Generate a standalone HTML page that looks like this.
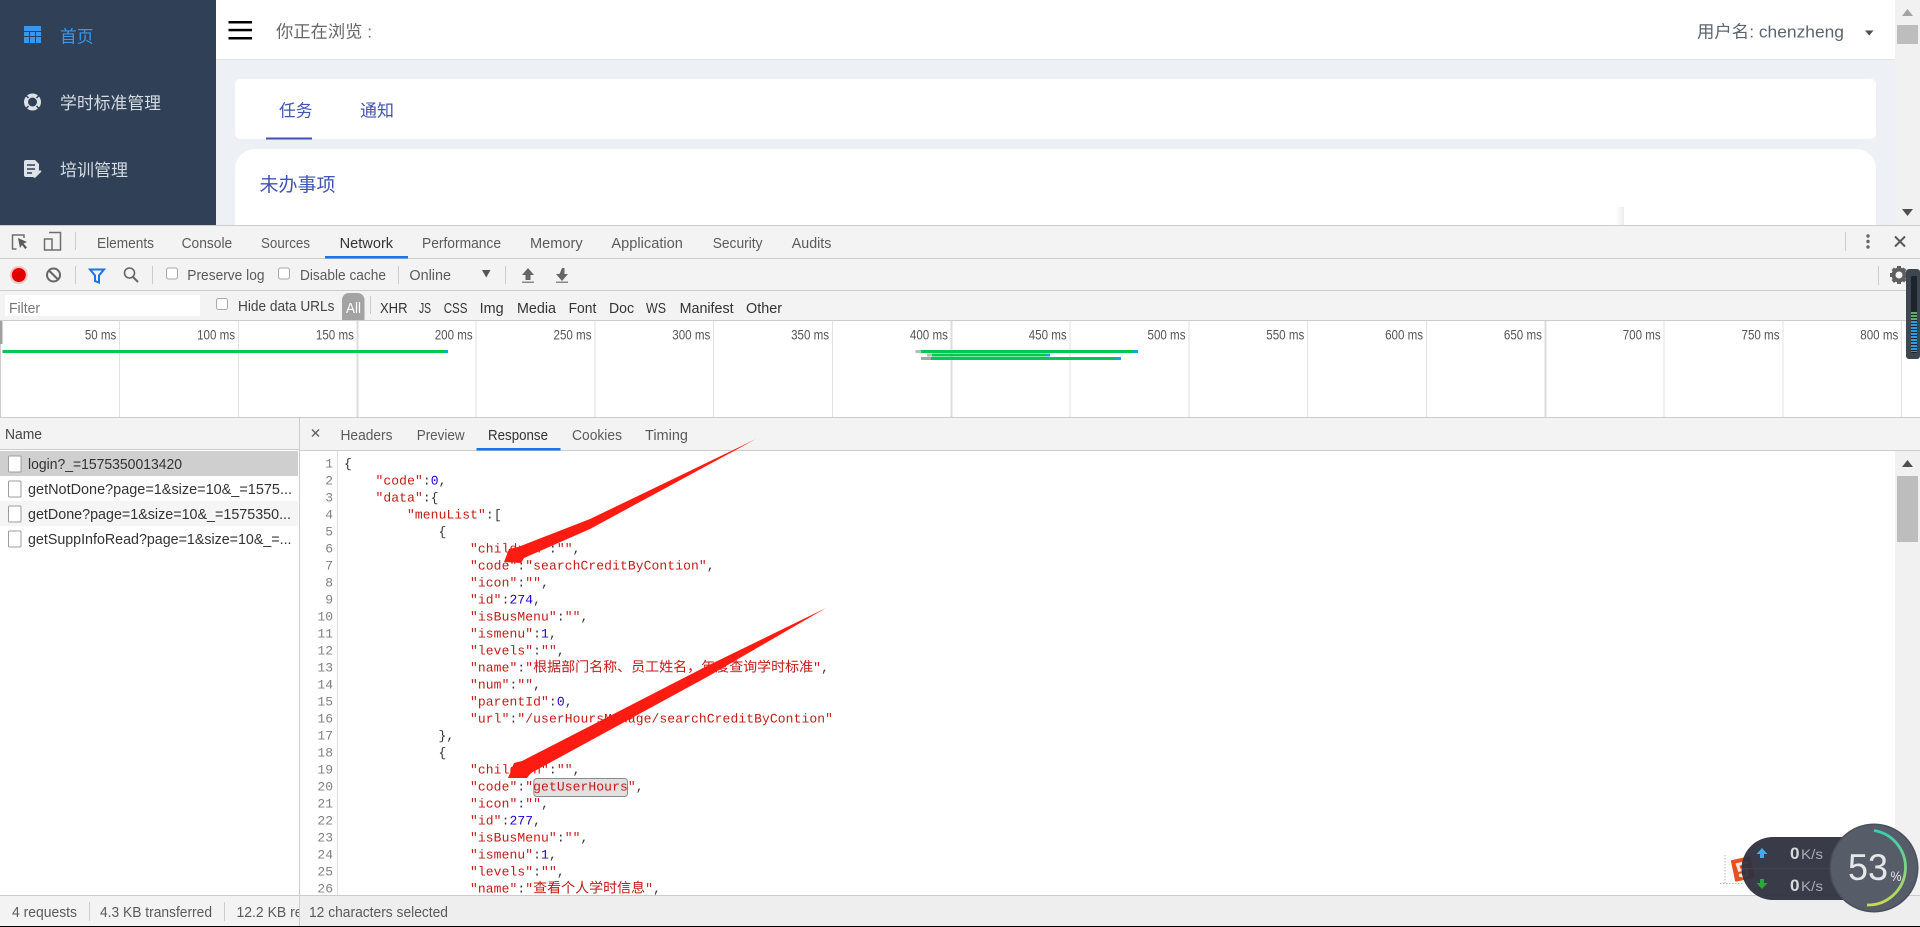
<!DOCTYPE html>
<html lang="zh-CN">
<head>
<meta charset="utf-8">
<title>Network</title>
<style>
html,body{margin:0;padding:0;background:#fff;overflow:hidden;width:1920px;height:927px}
svg{display:block}
text{font-family:"Liberation Sans","Noto Sans CJK SC",sans-serif;white-space:pre}
.dv{font-size:15px;fill:#5a5a5a}
.dk{font-size:15px;fill:#333}
.ms{font-size:13.5px;fill:#555}
.st{font-size:14.5px;fill:#5a5a5a}
.cn{font-size:17px;fill:#666}
.m{font-family:"Liberation Mono","Noto Sans CJK SC",monospace;font-size:13px;letter-spacing:.09px;fill:#c41a16;text-rendering:geometricPrecision}
.m tspan.p{fill:#333}
.m tspan.n{fill:#1c00cf}
.m tspan.c{font-family:"Noto Sans CJK SC",sans-serif;font-size:14px;letter-spacing:0}
.g{font-family:"Liberation Mono",monospace;font-size:13px;fill:#808080;text-anchor:end}
.e{text-anchor:end}
</style>
</head>
<body>
<svg xmlns="http://www.w3.org/2000/svg" width="1920" height="927" viewBox="0 0 1920 927">
<defs>
<linearGradient id="fade" x1="0" x2="1" y1="0" y2="0"><stop offset="0" stop-color="#fff"/><stop offset="1" stop-color="#ececec"/></linearGradient>
<linearGradient id="ring" x1="0" x2="0" y1="0" y2="1"><stop offset="0" stop-color="#34d0b0"/><stop offset="1" stop-color="#c8dc50"/></linearGradient>
<pattern id="led" width="6" height="3" patternUnits="userSpaceOnUse"><rect width="6" height="2" fill="#2a9fd8"/></pattern>
<pattern id="ledg" width="6" height="3" patternUnits="userSpaceOnUse"><rect width="6" height="2" fill="#5fae6a"/></pattern>
<clipPath id="cname"><rect x="0" y="895" width="299" height="31"/></clipPath>
</defs>

<!-- page behind devtools -->
<rect width="1920" height="927" fill="#fff"/>
<rect x="216" y="59" width="1679" height="166" fill="#edf1f5"/>
<rect x="216" y="0" width="1679" height="59" fill="#fff"/>
<rect x="216" y="59" width="1679" height="1" fill="#e2e5e8"/>
<rect x="0" y="0" width="216" height="225" fill="#2f4057"/>

<!-- sidebar icons -->
<g>
<rect x="24" y="26" width="17" height="17" fill="#3a97ee"/>
<g fill="#2f4057"><rect x="24" y="31" width="17" height="1"/><rect x="24" y="36" width="17" height="1"/><rect x="29" y="31" width="1" height="12"/><rect x="35" y="31" width="1" height="12"/></g>
</g>
<g transform="translate(32.5 102)">
<circle r="6.500" fill="none" stroke="#dde2e8" stroke-width="4"/>
<g stroke="#2f4057" stroke-width="1.500"><path d="M-7-7l3 3M7-7l-3 3M-7 7l3-3M7 7l-3-3"/></g>
</g>
<g>
<path d="M24 162q0-2 2-2h9l4 4v7l-5 6H26q-2 0-2-2z" fill="#dde2e8"/>
<g stroke="#2f4057" stroke-width="1.400"><path d="M27 165h8M27 169h8M27 173h5"/></g>
<path d="M34 176l6-6 1.500 1.500-6 6-2 .5z" fill="#dde2e8"/>
</g>

<text x="60" y="42.500" fill="#3a97ee" lengthAdjust="spacingAndGlyphs" textLength="33.500" style="font-size:17px">首页</text>
<text x="60" y="109" style="font-size:17px" fill="#d5dbe2" lengthAdjust="spacingAndGlyphs" textLength="101">学时标准管理</text>
<text x="60" y="176" style="font-size:17px" fill="#d5dbe2" lengthAdjust="spacingAndGlyphs" textLength="68">培训管理</text>

<!-- header -->
<g fill="#000"><rect x="228.500" y="21" width="23.500" height="2.500"/><rect x="228.500" y="28.800" width="23.500" height="2.500"/><rect x="228.500" y="37" width="23.500" height="2.500"/></g>
<text class="cn" x="276" y="37.500" lengthAdjust="spacingAndGlyphs" textLength="96">你正在浏览 :</text>
<text x="1697" y="37.500" style="font-size:17px" fill="#5c6470" lengthAdjust="spacingAndGlyphs" textLength="147">用户名: chenzheng</text>
<path d="M1865 30.500h8.500l-4.250 5z" fill="#4a5058"/>

<!-- cards -->
<rect x="235" y="79" width="1641" height="60" rx="5" fill="#fff"/>
<rect x="266" y="137.500" width="46" height="2" fill="#4054b2"/>
<text x="279" y="116.500" style="font-size:17px" fill="#4054b2" lengthAdjust="spacingAndGlyphs" textLength="33.500">任务</text>
<text x="360" y="116.500" style="font-size:17px" fill="#4054b2" lengthAdjust="spacingAndGlyphs" textLength="34">通知</text>
<path d="M235 225V169a20 20 0 0 1 20-20H1856a20 20 0 0 1 20 20V225z" fill="#fff"/>
<text x="259.500" y="191" style="font-size:19px" fill="#4054b2" lengthAdjust="spacingAndGlyphs" textLength="76">未办事项</text>
<rect x="1615" y="207" width="9" height="18" fill="url(#fade)"/>

<!-- page scrollbar -->
<rect x="1895" y="0" width="25" height="225" fill="#f1f1f1"/>
<path d="M1907.500 9l5.500 7h-11z" fill="#a3a3a3"/>
<rect x="1897" y="25" width="21" height="19" fill="#bdbdbd"/>
<path d="M1902 209h11l-5.500 7z" fill="#505050"/>

<!-- devtools chrome -->
<rect x="0" y="225" width="1920" height="95" fill="#f3f3f3"/>
<rect x="0" y="225" width="1920" height="1" fill="#ccc"/>
<rect x="0" y="258" width="1920" height="1" fill="#ccc"/>
<rect x="0" y="290" width="1920" height="1" fill="#ccc"/>
<rect x="0" y="320" width="1920" height="1" fill="#ccc"/>

<!-- toolbar 1 icons -->
<g fill="none" stroke="#6e6e6e" stroke-width="1.500">
<path d="M24 238v-3h-11.500v14h4"/>
</g>
<path d="M18 238l9 4-3.500 1.500 3.500 4-1.800 1.500-3.200-4-2 3z" fill="#5a5a5a"/>
<g fill="none" stroke="#6e6e6e" stroke-width="1.500">
<path d="M49 232.500h11.500v17.500H44.500V239H52v11"/>
</g>
<rect x="75" y="232" width="1" height="18" fill="#ccc"/>

<text class="dv" x="97" y="248" lengthAdjust="spacingAndGlyphs" textLength="57">Elements</text>
<text class="dv" x="181.600" y="248" lengthAdjust="spacingAndGlyphs" textLength="50.600">Console</text>
<text class="dv" x="261" y="248" lengthAdjust="spacingAndGlyphs" textLength="49">Sources</text>
<text class="dk" x="339.600" y="248" lengthAdjust="spacingAndGlyphs" textLength="53.500">Network</text>
<text class="dv" x="422" y="248" lengthAdjust="spacingAndGlyphs" textLength="79">Performance</text>
<text class="dv" x="530" y="248" lengthAdjust="spacingAndGlyphs" textLength="52.600">Memory</text>
<text class="dv" x="611.400" y="248" lengthAdjust="spacingAndGlyphs" textLength="71.500">Application</text>
<text class="dv" x="712.700" y="248" lengthAdjust="spacingAndGlyphs" textLength="49.800">Security</text>
<text class="dv" x="791.800" y="248" lengthAdjust="spacingAndGlyphs" textLength="39.600">Audits</text>
<rect x="325" y="256" width="83" height="2.500" fill="#1a73e8"/>

<rect x="1845" y="232" width="1" height="19" fill="#ccc"/>
<g fill="#666"><circle cx="1868" cy="236" r="1.700"/><circle cx="1868" cy="241.500" r="1.700"/><circle cx="1868" cy="247" r="1.700"/></g>
<path d="M1895 236.500l10 10M1905 236.500l-10 10" stroke="#5a5a5a" stroke-width="2"/>

<!-- toolbar 2 -->
<circle cx="18.800" cy="275" r="9" fill="#f4c4c4"/>
<circle cx="18.800" cy="275" r="7" fill="#e00000"/>
<circle cx="53.500" cy="275" r="6.500" fill="none" stroke="#666" stroke-width="2"/>
<path d="M49 270.500l9 9" stroke="#666" stroke-width="2"/>
<rect x="75" y="266" width="1" height="18" fill="#ccc"/>
<path d="M90 269.500h14l-5 6v7l-4-1.500v-5.500z" fill="none" stroke="#1a73e8" stroke-width="2"/>
<circle cx="129.500" cy="273" r="5" fill="none" stroke="#666" stroke-width="1.600"/>
<path d="M133 277l5 5" stroke="#666" stroke-width="2"/>
<rect x="152" y="266" width="1" height="18" fill="#ccc"/>
<rect x="166.500" y="268" width="11" height="11" rx="2" fill="#fff" stroke="#aaa"/>
<text class="dv" x="187.300" y="280" lengthAdjust="spacingAndGlyphs" textLength="77.200">Preserve log</text>
<rect x="278.500" y="268" width="11" height="11" rx="2" fill="#fff" stroke="#aaa"/>
<text class="dv" x="300" y="280" lengthAdjust="spacingAndGlyphs" textLength="86">Disable cache</text>
<rect x="398" y="266" width="1" height="18" fill="#ccc"/>
<text class="dv" x="409.400" y="280" lengthAdjust="spacingAndGlyphs" textLength="41.600">Online</text>
<path d="M482 270h8.500l-4.250 7.500z" fill="#555"/>
<rect x="505" y="266" width="1" height="18" fill="#ccc"/>
<path d="M528 268l6 7h-3.500v5h-5v-5H522z" fill="#666"/><rect x="522" y="281.500" width="12" height="1.500" fill="#888"/>
<path d="M561.500 268h2.500v6h3.500l-6 7-6-7h3.500z" transform="translate(.5 0)" fill="#666"/><rect x="556" y="281.500" width="12" height="1.500" fill="#888"/>
<rect x="1878" y="266" width="1" height="19" fill="#ccc"/>
<g transform="translate(1899 275)" fill="#5f5f5f">
<circle r="5.500" fill="none" stroke="#5f5f5f" stroke-width="4"/>
<path d="M-2-9h4v4h-4zM-2 5h4v4h-4zM-9-2h4v4h-4zM5-2h4v4H5zM-7.500-5l2.500-2.500 3 3-2.500 2.500zM4.500-7.500l3 2.500-3 3-2.500-3zM-7.500 5l3-2.500 2.500 3-3 2.500zM2.500 5l2.500-3 2.500 3-2.500 2.500z"/>
</g>

<!-- toolbar 3 -->
<rect x="5" y="295" width="195" height="21" fill="#fff"/>
<text class="st" x="9" y="313" style="fill:#777" lengthAdjust="spacingAndGlyphs" textLength="31">Filter</text>
<rect x="216.500" y="298.500" width="11" height="11" rx="2" fill="#fff" stroke="#aaa"/>
<text class="dk" x="238" y="311" lengthAdjust="spacingAndGlyphs" textLength="96.500" style="fill:#444">Hide data URLs</text>
<path d="M342 320V300a7 7 0 0 1 7-7h8.500a7 7 0 0 1 7 7V320z" fill="#a3a3a3"/>
<text x="346" y="313" style="font-size:15px" fill="#fff" lengthAdjust="spacingAndGlyphs" textLength="15">All</text>
<rect x="370" y="296" width="1" height="18" fill="#ccc"/>
<g class="ft">
<text class="dk" x="380" y="313" lengthAdjust="spacingAndGlyphs" textLength="27.500">XHR</text>
<text class="dk" x="419" y="313" lengthAdjust="spacingAndGlyphs" textLength="12">JS</text>
<text class="dk" x="443.700" y="313" lengthAdjust="spacingAndGlyphs" textLength="23.700">CSS</text>
<text class="dk" x="479.600" y="313" lengthAdjust="spacingAndGlyphs" textLength="24">Img</text>
<text class="dk" x="517" y="313" lengthAdjust="spacingAndGlyphs" textLength="39">Media</text>
<text class="dk" x="568.600" y="313" lengthAdjust="spacingAndGlyphs" textLength="27.700">Font</text>
<text class="dk" x="609" y="313" lengthAdjust="spacingAndGlyphs" textLength="25">Doc</text>
<text class="dk" x="646" y="313" lengthAdjust="spacingAndGlyphs" textLength="20">WS</text>
<text class="dk" x="679.600" y="313" lengthAdjust="spacingAndGlyphs" textLength="54">Manifest</text>
<text class="dk" x="746" y="313" lengthAdjust="spacingAndGlyphs" textLength="36">Other</text>
</g>

<!-- overview -->
<rect x="0" y="321" width="1920" height="96" fill="#fff"/>
<rect x="0" y="321" width="1" height="96" fill="#ccc"/>
<g fill="#e2e2e2">
<rect x="119" y="321" width="1" height="96"/><rect x="238" y="321" width="1" height="96"/><rect x="356.500" y="321" width="2" height="96" fill="#dcdcdc"/><rect x="475.500" y="321" width="1" height="96"/><rect x="594.500" y="321" width="1" height="96"/><rect x="713" y="321" width="1" height="96"/><rect x="832" y="321" width="1" height="96"/><rect x="950.500" y="321" width="2" height="96" fill="#dcdcdc"/><rect x="1069.500" y="321" width="1" height="96"/><rect x="1188.500" y="321" width="1" height="96"/><rect x="1307" y="321" width="1" height="96"/><rect x="1426" y="321" width="1" height="96"/><rect x="1544.500" y="321" width="2" height="96" fill="#dcdcdc"/><rect x="1663.500" y="321" width="1" height="96"/><rect x="1782.500" y="321" width="1" height="96"/><rect x="1901" y="321" width="1" height="96"/>
</g>
<rect x="0" y="321" width="2.500" height="23" fill="#a0a0a0"/>
<g>
<text class="ms" x="84.900" y="339.500" lengthAdjust="spacingAndGlyphs" textLength="31.400">50 ms</text>
<text class="ms" x="197.100" y="339.500" lengthAdjust="spacingAndGlyphs" textLength="38">100 ms</text>
<text class="ms" x="315.900" y="339.500" lengthAdjust="spacingAndGlyphs" textLength="38">150 ms</text>
<text class="ms" x="434.700" y="339.500" lengthAdjust="spacingAndGlyphs" textLength="38">200 ms</text>
<text class="ms" x="553.500" y="339.500" lengthAdjust="spacingAndGlyphs" textLength="38">250 ms</text>
<text class="ms" x="672.300" y="339.500" lengthAdjust="spacingAndGlyphs" textLength="38">300 ms</text>
<text class="ms" x="791.100" y="339.500" lengthAdjust="spacingAndGlyphs" textLength="38">350 ms</text>
<text class="ms" x="909.900" y="339.500" lengthAdjust="spacingAndGlyphs" textLength="38">400 ms</text>
<text class="ms" x="1028.700" y="339.500" lengthAdjust="spacingAndGlyphs" textLength="38">450 ms</text>
<text class="ms" x="1147.500" y="339.500" lengthAdjust="spacingAndGlyphs" textLength="38">500 ms</text>
<text class="ms" x="1266.300" y="339.500" lengthAdjust="spacingAndGlyphs" textLength="38">550 ms</text>
<text class="ms" x="1385.100" y="339.500" lengthAdjust="spacingAndGlyphs" textLength="38">600 ms</text>
<text class="ms" x="1503.900" y="339.500" lengthAdjust="spacingAndGlyphs" textLength="38">650 ms</text>
<text class="ms" x="1622.700" y="339.500" lengthAdjust="spacingAndGlyphs" textLength="38">700 ms</text>
<text class="ms" x="1741.500" y="339.500" lengthAdjust="spacingAndGlyphs" textLength="38">750 ms</text>
<text class="ms" x="1860.300" y="339.500" lengthAdjust="spacingAndGlyphs" textLength="38">800 ms</text>
</g>
<rect x="2" y="350" width="2" height="3" fill="#bbb"/>
<rect x="3" y="350" width="442" height="3" fill="#00c853"/><rect x="445" y="350" width="3" height="3" fill="#12a5ef"/>
<rect x="915.500" y="350" width="6" height="3" fill="#bbb"/><rect x="921" y="350" width="212" height="3" fill="#00c853"/><rect x="1133" y="350" width="5" height="3" fill="#12a5ef"/>
<rect x="927" y="353.500" width="5" height="3" fill="#bbb"/><rect x="932" y="353.500" width="114" height="3" fill="#00c853"/><rect x="1046" y="353.500" width="4" height="3" fill="#12a5ef"/>
<rect x="921" y="357" width="10" height="3" fill="#a8a8a8"/><rect x="931" y="357" width="184.500" height="3" fill="#00c853"/><rect x="1115.500" y="357" width="5.500" height="3" fill="#12a5ef"/>
<rect x="0" y="417" width="1920" height="1" fill="#ccc"/>

<!-- name column -->
<rect x="0" y="418" width="299" height="32" fill="#f3f3f3"/>
<rect x="0" y="449" width="299" height="1" fill="#ccc"/>
<rect x="0" y="451" width="298" height="25" fill="#cfcfcf"/>
<rect x="0" y="501" width="298" height="25" fill="#f5f5f5"/>
<text class="dk" x="5" y="439" lengthAdjust="spacingAndGlyphs" textLength="37" style="fill:#444">Name</text>
<g fill="#fff" stroke="#9d9d9d">
<rect x="8.500" y="456" width="12.500" height="16" rx="1"/>
<rect x="8.500" y="481" width="12.500" height="16" rx="1"/>
<rect x="8.500" y="506" width="12.500" height="16" rx="1"/>
<rect x="8.500" y="531" width="12.500" height="16" rx="1"/>
</g>
<text class="dk" x="28" y="469" lengthAdjust="spacingAndGlyphs" textLength="154">login?_=1575350013420</text>
<text class="dk" x="28" y="494" lengthAdjust="spacingAndGlyphs" textLength="264">getNotDone?page=1&amp;size=10&amp;_=1575...</text>
<text class="dk" x="28" y="519" lengthAdjust="spacingAndGlyphs" textLength="263">getDone?page=1&amp;size=10&amp;_=1575350...</text>
<text class="dk" x="28" y="544" lengthAdjust="spacingAndGlyphs" textLength="263.500">getSuppInfoRead?page=1&amp;size=10&amp;_=...</text>
<rect x="299" y="417" width="1" height="478" fill="#ccc"/>

<!-- detail tabs -->
<rect x="300" y="418" width="1620" height="32" fill="#f3f3f3"/>
<rect x="300" y="450" width="1620" height="1" fill="#ccc"/>
<path d="M312 429.500l7 7M319 429.500l-7 7" stroke="#666" stroke-width="1.500"/>
<text class="dv" x="340.500" y="440" lengthAdjust="spacingAndGlyphs" textLength="52">Headers</text>
<text class="dv" x="416.700" y="440" lengthAdjust="spacingAndGlyphs" textLength="48">Preview</text>
<text class="dk" x="488" y="440" lengthAdjust="spacingAndGlyphs" textLength="60">Response</text>
<text class="dv" x="572" y="440" lengthAdjust="spacingAndGlyphs" textLength="50">Cookies</text>
<text class="dv" x="645" y="440" lengthAdjust="spacingAndGlyphs" textLength="43">Timing</text>
<rect x="476.500" y="448" width="84" height="2.500" fill="#1a73e8"/>

<!-- code -->
<rect x="337" y="451" width="1" height="444" fill="#ddd"/>
<rect x="533.800" y="778.500" width="93.700" height="18" rx="3" fill="#e0e0e0" stroke="#8a8a8a"/>
<g>
<text class="g" x="333" y="467.500">1</text><text class="g" x="333" y="484.500">2</text><text class="g" x="333" y="501.500">3</text><text class="g" x="333" y="518.500">4</text><text class="g" x="333" y="535.500">5</text><text class="g" x="333" y="552.500">6</text><text class="g" x="333" y="569.500">7</text><text class="g" x="333" y="586.500">8</text><text class="g" x="333" y="603.500">9</text><text class="g" x="333" y="620.500">10</text><text class="g" x="333" y="637.500">11</text><text class="g" x="333" y="654.500">12</text><text class="g" x="333" y="671.500">13</text><text class="g" x="333" y="688.500">14</text><text class="g" x="333" y="705.500">15</text><text class="g" x="333" y="722.500">16</text><text class="g" x="333" y="739.500">17</text><text class="g" x="333" y="756.500">18</text><text class="g" x="333" y="773.500">19</text><text class="g" x="333" y="790.500">20</text><text class="g" x="333" y="807.500">21</text><text class="g" x="333" y="824.500">22</text><text class="g" x="333" y="841.500">23</text><text class="g" x="333" y="858.500">24</text><text class="g" x="333" y="875.500">25</text><text class="g" x="333" y="892.500">26</text>
</g>
<g>
<text class="m" x="344" y="467.500"><tspan class="p">{</tspan></text>
<text class="m" x="375.500" y="484.500">"code"<tspan class="p">:</tspan><tspan class="n">0</tspan><tspan class="p">,</tspan></text>
<text class="m" x="375.500" y="501.500">"data"<tspan class="p">:{</tspan></text>
<text class="m" x="407" y="518.500">"menuList"<tspan class="p">:[</tspan></text>
<text class="m" x="438.500" y="535.500"><tspan class="p">{</tspan></text>
<text class="m" x="470" y="552.500">"children"<tspan class="p">:</tspan>""<tspan class="p">,</tspan></text>
<text class="m" x="470" y="569.500">"code"<tspan class="p">:</tspan>"searchCreditByContion"<tspan class="p">,</tspan></text>
<text class="m" x="470" y="586.500">"icon"<tspan class="p">:</tspan>""<tspan class="p">,</tspan></text>
<text class="m" x="470" y="603.500">"id"<tspan class="p">:</tspan><tspan class="n">274</tspan><tspan class="p">,</tspan></text>
<text class="m" x="470" y="620.500">"isBusMenu"<tspan class="p">:</tspan>""<tspan class="p">,</tspan></text>
<text class="m" x="470" y="637.500">"ismenu"<tspan class="p">:</tspan><tspan class="n">1</tspan><tspan class="p">,</tspan></text>
<text class="m" x="470" y="654.500">"levels"<tspan class="p">:</tspan>""<tspan class="p">,</tspan></text>
<text class="m" x="470" y="671.500">"name"<tspan class="p">:</tspan>"<tspan class="c">根据部门名称、员工姓名，年度查询学时标准</tspan>"<tspan class="p">,</tspan></text>
<text class="m" x="470" y="688.500">"num"<tspan class="p">:</tspan>""<tspan class="p">,</tspan></text>
<text class="m" x="470" y="705.500">"parentId"<tspan class="p">:</tspan><tspan class="n">0</tspan><tspan class="p">,</tspan></text>
<text class="m" x="470" y="722.500">"url"<tspan class="p">:</tspan>"/userHoursManage/searchCreditByContion"</text>
<text class="m" x="438.500" y="739.500"><tspan class="p">},</tspan></text>
<text class="m" x="438.500" y="756.500"><tspan class="p">{</tspan></text>
<text class="m" x="470" y="773.500">"children"<tspan class="p">:</tspan>""<tspan class="p">,</tspan></text>
<text class="m" x="470" y="790.500">"code"<tspan class="p">:</tspan>"getUserHours"<tspan class="p">,</tspan></text>
<text class="m" x="470" y="807.500">"icon"<tspan class="p">:</tspan>""<tspan class="p">,</tspan></text>
<text class="m" x="470" y="824.500">"id"<tspan class="p">:</tspan><tspan class="n">277</tspan><tspan class="p">,</tspan></text>
<text class="m" x="470" y="841.500">"isBusMenu"<tspan class="p">:</tspan>""<tspan class="p">,</tspan></text>
<text class="m" x="470" y="858.500">"ismenu"<tspan class="p">:</tspan><tspan class="n">1</tspan><tspan class="p">,</tspan></text>
<text class="m" x="470" y="875.500">"levels"<tspan class="p">:</tspan>""<tspan class="p">,</tspan></text>
<text class="m" x="470" y="892.500">"name"<tspan class="p">:</tspan>"<tspan class="c">查看个人学时信息</tspan>"<tspan class="p">,</tspan></text>
</g>

<!-- code scrollbar -->
<rect x="1895" y="451" width="25" height="444" fill="#f1f1f1"/>
<path d="M1907.500 460l5.500 7h-11z" fill="#505050"/>
<rect x="1897" y="476" width="21" height="66" fill="#bdbdbd"/>
<path d="M1902 885h11l-5.500 7z" fill="#505050"/>

<!-- red arrows -->
<path d="M756 439L590 519 518 547 509 549 504 562 521 563 524 558 590 529z" fill="#fe1c12"/>
<path d="M826 608L707 666 522 761 514 763 508 778 527 778 531 773 707 677z" fill="#fe1c12"/>

<!-- status bar -->
<rect x="0" y="895" width="1920" height="31" fill="#f3f3f3"/>
<rect x="300" y="896" width="1620" height="30" fill="#eee"/>
<rect x="0" y="895" width="1920" height="1" fill="#ccc"/>
<rect x="299" y="895" width="1" height="31" fill="#ccc"/>
<rect x="89" y="902" width="1" height="19" fill="#ccc"/>
<rect x="224" y="902" width="1" height="19" fill="#ccc"/>
<text class="st" x="12" y="917" lengthAdjust="spacingAndGlyphs" textLength="65">4 requests</text>
<text class="st" x="100" y="917" lengthAdjust="spacingAndGlyphs" textLength="112">4.3 KB transferred</text>
<g clip-path="url(#cname)"><text class="st" x="236.500" y="917" lengthAdjust="spacingAndGlyphs" textLength="66">12.2 KB re</text></g>
<text class="st" x="309" y="917" lengthAdjust="spacingAndGlyphs" textLength="139">12 characters selected</text>
<rect x="0" y="926" width="1920" height="1" fill="#000"/>

<!-- meter widget -->
<rect x="1906" y="269" width="14" height="90" rx="3" fill="#3e4750"/>
<rect x="1911" y="276" width="6" height="77" rx="1" fill="#1d232b"/>
<rect x="1911" y="312" width="6" height="9" fill="url(#ledg)"/>
<rect x="1911" y="321" width="6" height="31" fill="url(#led)"/>

<!-- speed widget -->
<path d="M1725 855v28M1720 883.500h24" stroke="#b5b5b5" stroke-width="1" stroke-dasharray="1.500 1.500" fill="none"/>
<g transform="translate(1733 858) rotate(-12 10 12)" fill="#e8501f"><rect width="20" height="22" rx="1"/><path d="M4 4h12v3H7.500v3H15v8l-5 2-5-2v-3h3v1l2 .8 2-.8v-3H5z" fill="#fff" opacity=".85"/></g>
<path d="M1773 837H1874V900H1773a31.500 31.500 0 0 1 0-63z" fill="#2e323e" fill-opacity=".95"/>
<rect x="1742" y="868" width="132" height="1" fill="#3f4350"/>
<path d="M1762 848l5.500 6h-3.500v4h-4v-4h-3.500z" fill="#42a9ec"/>
<path d="M1760 879h4v4h3.500l-5.500 6-5.500-6h3.500z" fill="#29a83c"/>
<text x="1790" y="859" style="font-size:17px;font-weight:bold" fill="#d8dade" lengthAdjust="spacingAndGlyphs" textLength="9.500">0</text>
<text x="1801" y="859" style="font-size:14px" fill="#a8acb4" lengthAdjust="spacingAndGlyphs" textLength="22">K/s</text>
<text x="1790" y="891" style="font-size:17px;font-weight:bold" fill="#d8dade" lengthAdjust="spacingAndGlyphs" textLength="9.500">0</text>
<text x="1801" y="891" style="font-size:14px" fill="#a8acb4" lengthAdjust="spacingAndGlyphs" textLength="22">K/s</text>
<circle cx="1874" cy="868" r="44.500" fill="#4a4f5c"/>
<circle cx="1874" cy="868" r="43" fill="#575c69"/>
<path d="M1874 830.500A37.500 37.500 0 0 1 1867 905" fill="none" stroke="url(#ring)" stroke-width="2.800"/>
<text x="1848" y="880" style="font-size:37px" fill="#e6e7ea" lengthAdjust="spacingAndGlyphs" textLength="40">53</text>
<text x="1890.500" y="881" style="font-size:14px" fill="#e6e7ea" lengthAdjust="spacingAndGlyphs" textLength="11">%</text>
</svg>
</body>
</html>
